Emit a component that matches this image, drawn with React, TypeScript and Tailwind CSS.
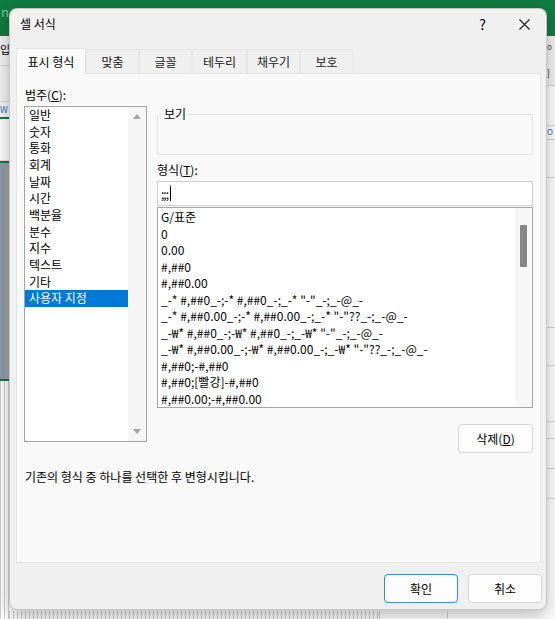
import { Fragment } from 'react';

const categories = ['일반', '숫자', '통화', '회계', '날짜', '시간', '백분율', '분수', '지수', '텍스트', '기타', '사용자 지정'];

const formats = [
  'G/표준',
  '0',
  '0.00',
  '#,##0',
  '#,##0.00',
  '_-* #,##0_-;-* #,##0_-;_-* "-"_-;_-@_-',
  '_-* #,##0.00_-;-* #,##0.00_-;_-* "-"??_-;_-@_-',
  '_-₩* #,##0_-;-₩* #,##0_-;_-₩* "-"_-;_-@_-',
  '_-₩* #,##0.00_-;-₩* #,##0.00_-;_-₩* "-"??_-;_-@_-',
  '#,##0;-#,##0',
  '#,##0;[빨강]-#,##0',
  '#,##0.00;-#,##0.00',
];

const tabs = [
  { label: '표시 형식', w: 'w-[70px]' },
  { label: '맞춤', w: 'w-[53px]' },
  { label: '글꼴', w: 'w-[53px]' },
  { label: '테두리', w: 'w-[55px]' },
  { label: '채우기', w: 'w-[53px]' },
  { label: '보호', w: 'w-[53px]' },
];

function Arrow({ up }: { up?: boolean }) {
  return (
    <svg width="8" height="5" viewBox="0 0 8 5">
      <path d={up ? 'M0 5 L4 0 L8 5 Z' : 'M0 0 L4 5 L8 0 Z'} fill="#a3a3a3" />
    </svg>
  );
}

function Excel() {
  return (
    <div className="flex h-full flex-col">
      <div className="h-[36px] shrink-0 bg-[#107c41] pl-[1px] text-[13px] leading-[24px] text-white/50">n</div>
      <div className="flex flex-1">
        {/* left edge of the sheet */}
        <div className="flex w-[9px] flex-col">
          <div className="h-[30px] border-b border-[#dcdcdc] bg-[#f3f3f3] text-[11px] leading-[26px]">입</div>
          <div className="h-[36px] border-b border-[#dcdcdc] bg-[#f3f3f3]" />
          <div className="h-[15px] bg-[#f7f7f7] text-[9px] leading-[15px] text-[#1f6fb5]">W</div>
          <div className="h-[2px] bg-[#107c41]" />
          <div className="h-[42px] border-b border-[#e2e2e2] bg-white" />
          <div className="h-[2px] bg-[#107c41]" />
          <div className="flex h-[216px]">
            <div className="w-[5px] bg-[#8d9cab]" />
            <div className="flex-1 bg-[#a4a0a4]" />
          </div>
          <div className="h-[2px] bg-[#107c41]" />
          <div className="flex-1 bg-white bg-[repeating-linear-gradient(90deg,#cfcfcf_0_1px,transparent_1px_4px)]" />
        </div>
        <div className="flex flex-1 flex-col">
          <div className="flex-1" />
          <div className="flex h-[8px]">
            <div className="w-[370px] bg-[repeating-linear-gradient(90deg,#cfcfcf_0_1px,transparent_1px_4px)]" />
            <div className="w-[68px] border-l border-[#d4d4d4]" />
            <div className="flex-1 border-l border-[#d4d4d4]" />
          </div>
        </div>
        {/* right edge of the sheet */}
        <div className="flex w-[8px] flex-col overflow-hidden text-[8px]">
          <div className="h-[26px] bg-[#f3f3f3] leading-[22px] text-[#444]">o</div>
          <div className="h-[24px] border-b border-[#d4d4d4] bg-[#f3f3f3] leading-[22px]">]</div>
          <div className="h-[40px] border-b border-[#d4d4d4] bg-white" />
          <div className="h-[14px] border-b border-[#d4d4d4] bg-white leading-[12px] text-[#1f6fb5]">O</div>
          <div className="h-[38px] border-b border-[#d4d4d4] bg-white" />
          <div className="h-[150px] border-b border-[#d4d4d4] bg-white" />
          <div className="h-[38px] border-b border-[#d4d4d4] bg-white" />
          <div className="h-[56px] border-b border-[#d4d4d4] bg-white" />
          <div className="h-[17px] border-b border-[#d4d4d4] bg-white" />
          <div className="h-[30px] border-b border-[#d4d4d4] bg-white" />
          <div className="h-[30px] border-b border-[#d4d4d4] bg-white" />
          <div className="flex-1 bg-white" />
        </div>
      </div>
    </div>
  );
}

function Btn({ children, focused, w }: { children: React.ReactNode; focused?: boolean; w: string }) {
  return (
    <div
      className={`flex h-[29px] ${w} items-center justify-center rounded-[4px] border bg-[#fdfdfd] text-[12px] ${
        focused ? 'border-[#3c8ad8]' : 'border-[#d6d6d6]'
      }`}
    >
      {children}
    </div>
  );
}

export default function App() {
  return (
    <div className="relative h-[619px] w-[555px] overflow-hidden bg-white font-['Noto_Sans_CJK_KR','Noto_Sans',sans-serif] text-[12px] text-black">
      <Excel />

      {/* 셀 서식 dialog */}
      <div className="absolute left-[9px] top-[8px] flex h-[602px] w-[538px] flex-col rounded-[8px] border border-[#a9a9a9]/60 bg-[#f0f0f0] shadow-[0_6px_18px_rgba(0,0,0,0.28)]">
        <div className="flex h-[30px] items-center pl-[10px] pr-[16px]">
          <span className="leading-[14px]">셀 서식</span>
          <span className="ml-auto mr-[33px] text-[14px] leading-[14px]">?</span>
          <svg width="11" height="11" viewBox="0 0 11 11">
            <path d="M0.5 0.5 L10.5 10.5 M10.5 0.5 L0.5 10.5" stroke="#1a1a1a" strokeWidth="1.1" />
          </svg>
        </div>

        {/* tabs */}
        <div className="mt-[9px] flex h-[25px] items-end pl-[6px]">
          {tabs.map((t, i) => (
            <div
              key={t.label}
              className={`flex ${t.w} items-center justify-center border-x border-t leading-[14px] ${
                i === 0
                  ? 'relative z-10 -mb-px h-[26px] border-[#e3e3e3] bg-[#f9f9f9]'
                  : 'h-[24px] border-[#e6e6e6] bg-[#f0f0f0] text-[#222]'
              }`}
            >
              {t.label}
            </div>
          ))}
        </div>

        {/* panel */}
        <div className="ml-[6px] mr-[5px] flex h-[490px] flex-col border border-[#e3e3e3] bg-[#f9f9f9] px-[7px] pt-[13px]">
          <div className="flex gap-[10px]">
            <div className="flex w-[123px] flex-col">
              <div className="h-[16px] pl-[1px] leading-[16px]">
                범주(<span className="underline">C</span>):
              </div>
              <div className="mt-[3px] flex h-[336px] border border-[#a5a5a5] bg-white">
                <div className="flex-1">
                  {categories.map((c, i) => (
                    <div
                      key={c}
                      className={`h-[16.67px] pl-[4px] leading-[16.67px] ${i === 11 ? 'bg-[#0078d7] text-white' : ''}`}
                    >
                      {c}
                    </div>
                  ))}
                </div>
                <div className="flex w-[18px] flex-col items-center justify-between bg-[#f5f5f5] py-[7px]">
                  <Arrow up />
                  <Arrow />
                </div>
              </div>
            </div>

            <div className="flex flex-1 flex-col">
              <div className="relative mt-[27px] h-[41px] rounded-[2px] border border-[#e3e3e3]">
                <span className="absolute -top-[8px] left-[4px] bg-[#f9f9f9] px-[2px] leading-[14px]">보기</span>
              </div>
              <div className="mt-[7px] h-[16px] leading-[16px]">
                형식(<span className="underline">T</span>):
              </div>
              <div className="mt-[3px] flex h-[25px] items-center border border-[#d0d0d0] bg-white pl-[3px] tracking-[-1px]">
                <span className="leading-[14px]">;;;</span>
                <span className="ml-[2px] h-[15px] w-px bg-black" />
              </div>
              <div className="mt-[1px] flex h-[201px] border border-[#a5a5a5] bg-white">
                <div className="flex-1 overflow-hidden whitespace-nowrap pl-[3px] pt-px">
                  {formats.map((f) => (
                    <Fragment key={f}>
                      <div className="h-[16.5px] leading-[16.5px]">{f}</div>
                    </Fragment>
                  ))}
                </div>
                <div className="w-[17px] bg-[#f7f7f7] pl-[5px] pt-[17px]">
                  <div className="h-[42px] w-[7px] rounded-[1px] bg-[#868686]" />
                </div>
              </div>
              <div className="mt-[16px] self-end">
                <Btn w="w-[75px]">
                  삭제(<span className="underline">D</span>)
                </Btn>
              </div>
            </div>
          </div>
          <div className="mt-[16px] h-[16px] pl-[1px] leading-[16px]">기존의 형식 중 하나를 선택한 후 변형시킵니다.</div>
        </div>

        {/* footer */}
        <div className="mt-[11px] flex justify-end gap-[10px] pr-[4px]">
          <Btn w="w-[74px]" focused>
            확인
          </Btn>
          <Btn w="w-[74px]">취소</Btn>
        </div>
      </div>
    </div>
  );
}
